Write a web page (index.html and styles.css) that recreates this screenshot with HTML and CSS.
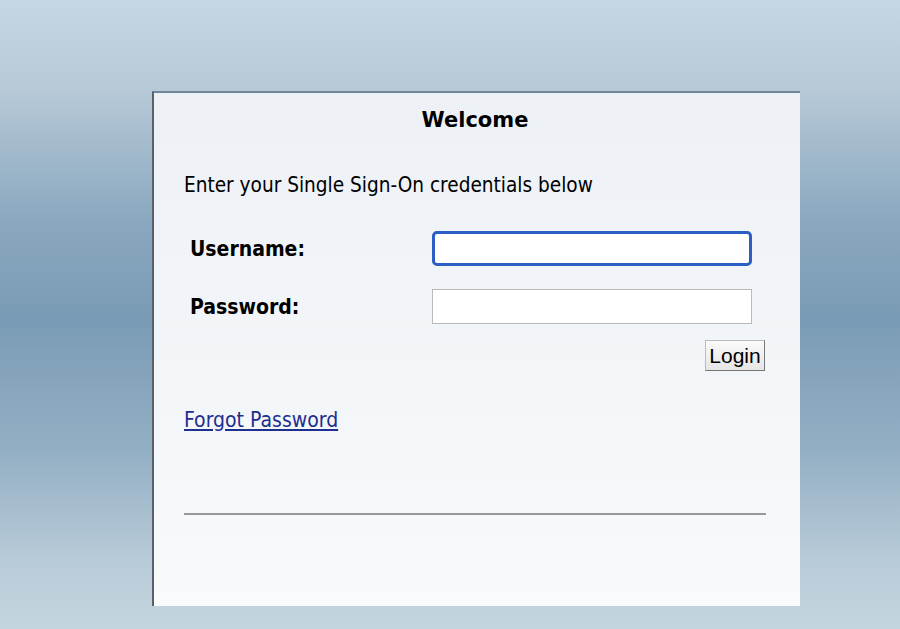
FILE: index.html
```html
<!DOCTYPE html>
<html>
<head>
<meta charset="utf-8">
<link rel="stylesheet" href="styles.css">
</head>
<body>
<div class="page">
  <div class="panel">
    <h1 class="title">Welcome</h1>
    <p class="intro">Enter your Single Sign-On credentials below</p>
    <form class="form">
      <div class="row">
        <label class="label">Username:</label>
        <input class="field field-focus" type="text">
      </div>
      <div class="row">
        <label class="label">Password:</label>
        <input class="field" type="password">
      </div>
      <div class="actions">
        <button class="btn" type="button">Login</button>
      </div>
    </form>
    <a class="link" href="#">Forgot Password</a>
    <hr class="rule">
  </div>
</div>
</body>
</html>
```
FILE: styles.css
```css
html, body {
  margin: 0;
  padding: 0;
  height: 100%;
}
body {
  background: linear-gradient(to bottom, #c6d6e2 0px, #b7c9d7 90px, #8aa8bf 220px, #7a9bb5 320px, #93afc4 450px, #b8cbd8 560px, #c5d5df 629px);
  font-family: "DejaVu Sans Condensed", "DejaVu Sans", Verdana, sans-serif;
  font-stretch: condensed;
  overflow: hidden;
}
.page {
  padding-top: 91px;
  padding-left: 152px;
}
.panel {
  width: 648px;
  height: 515px;
  box-sizing: border-box;
  border-left: 2px solid #56616b;
  border-top: 2px solid #6f869b;
  background: linear-gradient(to bottom, #edf1f6, #f8fafb);
  padding: 0 34px 0 30px;
}
.title {
  margin: 12px 0 0;
  text-align: center;
  font-family: "DejaVu Sans", Verdana, sans-serif;
  font-stretch: normal;
  font-size: 21px;
  font-weight: bold;
  color: #000;
  line-height: 30px;
}
.intro {
  margin: 37px 0 0;
  font-size: 20.6px;
  line-height: 26px;
  color: #000;
}
.form {
  margin-top: 33px;
}
.row {
  display: flex;
  align-items: center;
  height: 35px;
  margin-bottom: 23px;
}
.label {
  width: 248px;
  padding-left: 6px;
  box-sizing: border-box;
  font-weight: bold;
  font-size: 21px;
  color: #000;
}
.field {
  width: 320px;
  height: 35px;
  box-sizing: border-box;
  border: 1px solid #b9b9b9;
  background: #fff;
  margin: 0;
  padding: 0 4px;
}
.field-focus {
  border: 3px solid #2a5fc4;
  border-radius: 5px;
}
.actions {
  display: flex;
  justify-content: flex-end;
  margin-top: -7px;
  padding-right: 1px;
}
.btn {
  width: 60px;
  height: 31px;
  box-sizing: border-box;
  font-family: "Liberation Sans", Arial, sans-serif;
  font-stretch: normal;
  font-size: 21px;
  color: #000;
  background: linear-gradient(#fafafa, #e6e6e6);
  border: 1px solid #777;
  border-top-color: #bbb;
  border-left-color: #bbb;
  padding: 0;
  line-height: 26px;
}
.link {
  display: inline-block;
  margin-top: 37px;
  font-size: 21px;
  color: #1e2f8f;
  text-decoration: underline;
}
.rule {
  margin: 81px 0 0;
  border: 0;
  border-top: 2px solid #999;
  height: 0;
}
```
